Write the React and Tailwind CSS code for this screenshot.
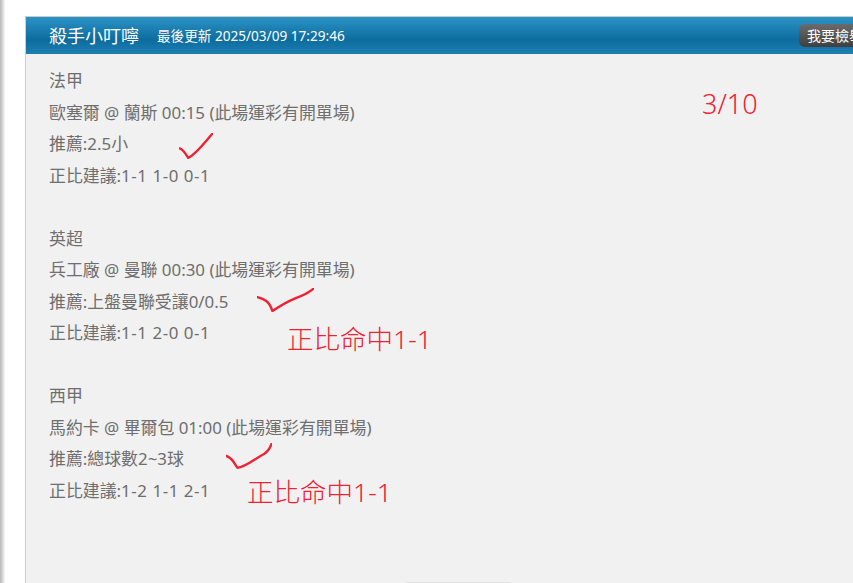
import React from 'react';

const font = { fontFamily: '"Noto Sans", "Noto Sans CJK TC", sans-serif' };

const matches = [
  {
    league: '法甲',
    game: '歐塞爾 @ 蘭斯 00:15 (此場運彩有開單場)',
    tip: '推薦:2.5小',
    score: '1-1 1-0 0-1',
  },
  {
    league: '英超',
    game: '兵工廠 @ 曼聯 00:30 (此場運彩有開單場)',
    tip: '推薦:上盤曼聯受讓0/0.5',
    score: '1-1 2-0 0-1',
  },
  {
    league: '西甲',
    game: '馬約卡 @ 畢爾包 01:00 (此場運彩有開單場)',
    tip: '推薦:總球數2~3球',
    score: '1-2 1-1 2-1',
  },
];

const Check = ({ className, d }) => (
  <svg className={className} viewBox="0 0 100 100" fill="none" stroke="#ee2233" strokeWidth="2.4" strokeLinecap="round" strokeLinejoin="round" preserveAspectRatio="none">
    <path d={d} vectorEffect="non-scaling-stroke" />
  </svg>
);

const Note = ({ className, children }) => (
  <div className={`absolute font-light text-[#ee2233] leading-none whitespace-nowrap ${className}`}>{children}</div>
);

export default function App() {
  return (
    <div className="relative h-[583px] w-[853px] overflow-hidden bg-white" style={font}>
      <div className="flex h-full">
        {/* left shadow strip */}
        <div className="w-[25px] shrink-0 bg-gradient-to-r from-[#b5b5b5] via-white via-[22%] to-white" />

        <div className="flex-1 pt-4">
          <div className="h-full border-l border-t border-[#cccccc] bg-[#f1f1f1]">
            <header className="flex h-[37px] items-center bg-gradient-to-b from-[#2b93c6] via-[#0c6c9e] via-[62%] to-[#1f7fb2] pl-[23px] text-white">
              <h1 className="text-[18px] leading-none">殺手小叮嚀</h1>
              <span className="ml-[18px] text-[13.6px] leading-none">最後更新 2025/03/09 17:29:46</span>
              <button className="ml-auto flex h-[23px] w-[54px] shrink-0 items-center overflow-hidden rounded-l-md bg-gradient-to-b from-[#6b6b6b] to-[#3f3f3f] pl-2 text-[14px] whitespace-nowrap text-white">
                我要檢舉
              </button>
            </header>

            <main className="pt-[11px] pl-[23px] text-[16.9px] leading-[31.5px] text-[#6e6e6e]">
              {matches.map((m) => (
                <section key={m.league} className="mb-[31.5px]">
                  <p>{m.league}</p>
                  <p>{m.game}</p>
                  <p>{m.tip}</p>
                  <p>
                    正比建議:<span className="tracking-[0.55px]">{m.score}</span>
                  </p>
                </section>
              ))}
            </main>
          </div>
        </div>
      </div>

      {/* hand-drawn annotations over the screenshot */}
      <Check className="absolute left-[179px] top-[133px] h-[27px] w-[34px]" d="M2 57 C12 60 18 75 27 92 C50 80 75 35 98 3" />
      <Check className="absolute left-[257px] top-[288px] h-[24px] w-[57px]" d="M1 38 C12 45 22 55 27 96 C40 75 55 55 68 42 C80 32 90 22 99 3" />
      <Check className="absolute left-[226px] top-[443px] h-[26px] w-[46px]" d="M1 50 C15 58 18 80 25 95 C40 95 60 65 75 50 C85 42 95 25 99 3" />
      <Note className="left-[702px] top-[90px] text-[27px]">3/10</Note>
      <Note className="left-[287px] top-[326px] text-[26.5px]">正比命中1-1</Note>
      <Note className="left-[247px] top-[479px] text-[26.5px]">正比命中1-1</Note>

      <div className="absolute bottom-0 left-[405px] h-px w-[105px] rounded-t bg-[#e2e2e2]" />
    </div>
  );
}
